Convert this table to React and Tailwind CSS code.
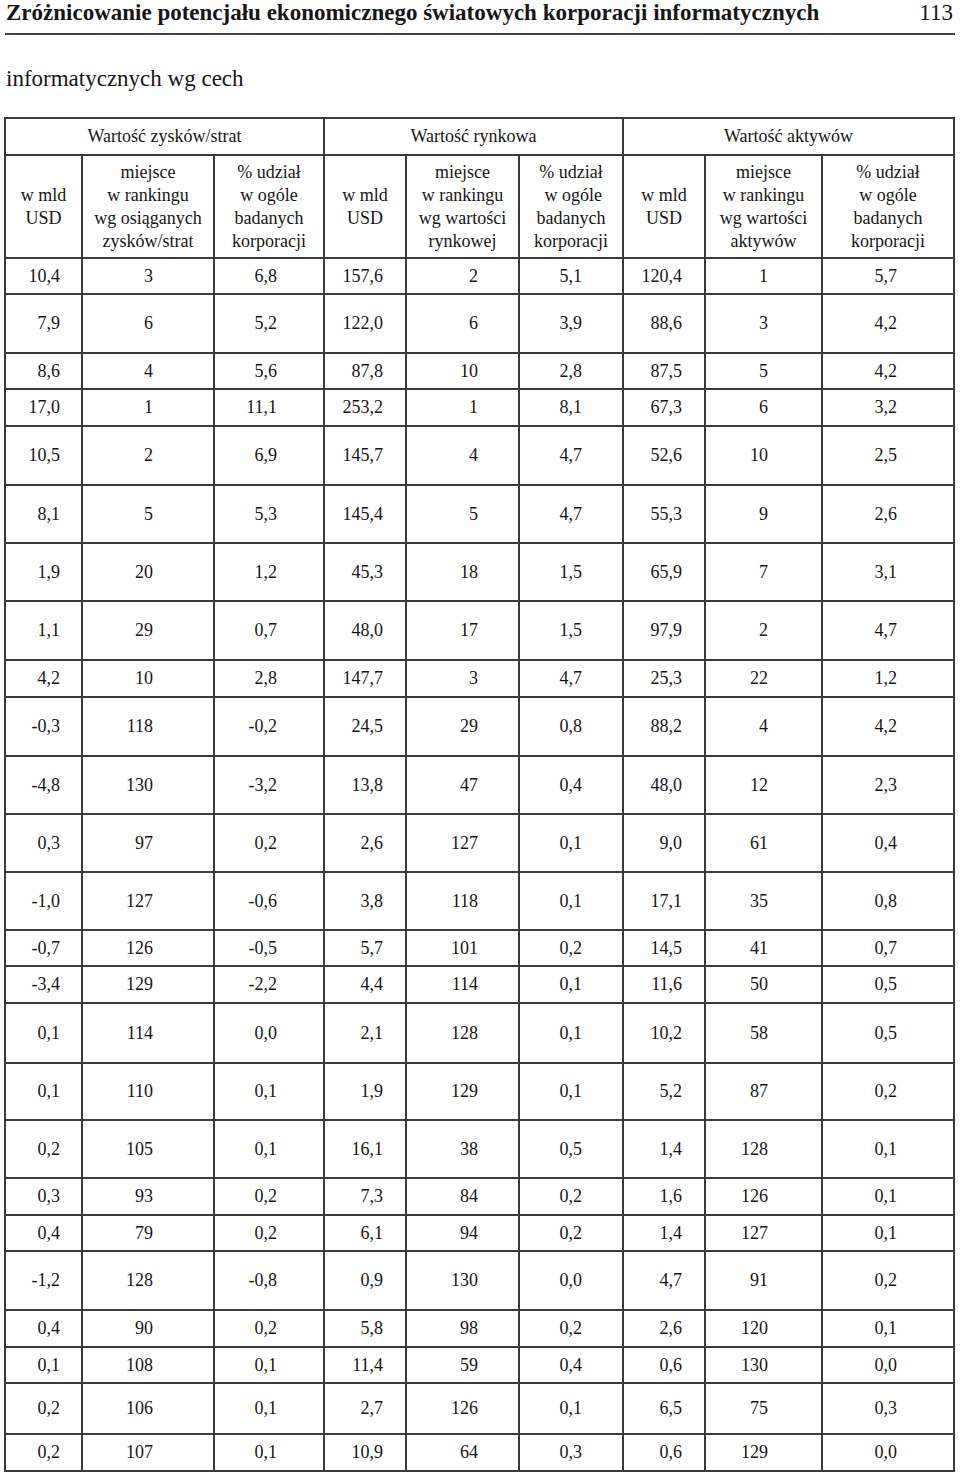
const rows = [
  [36, ["10,4", "3", "6,8", "157,6", "2", "5,1", "120,4", "1", "5,7"]],
  [59, ["7,9", "6", "5,2", "122,0", "6", "3,9", "88,6", "3", "4,2"]],
  [36, ["8,6", "4", "5,6", "87,8", "10", "2,8", "87,5", "5", "4,2"]],
  [37, ["17,0", "1", "11,1", "253,2", "1", "8,1", "67,3", "6", "3,2"]],
  [59, ["10,5", "2", "6,9", "145,7", "4", "4,7", "52,6", "10", "2,5"]],
  [58, ["8,1", "5", "5,3", "145,4", "5", "4,7", "55,3", "9", "2,6"]],
  [58, ["1,9", "20", "1,2", "45,3", "18", "1,5", "65,9", "7", "3,1"]],
  [59, ["1,1", "29", "0,7", "48,0", "17", "1,5", "97,9", "2", "4,7"]],
  [37, ["4,2", "10", "2,8", "147,7", "3", "4,7", "25,3", "22", "1,2"]],
  [59, ["-0,3", "118", "-0,2", "24,5", "29", "0,8", "88,2", "4", "4,2"]],
  [58, ["-4,8", "130", "-3,2", "13,8", "47", "0,4", "48,0", "12", "2,3"]],
  [58, ["0,3", "97", "0,2", "2,6", "127", "0,1", "9,0", "61", "0,4"]],
  [58, ["-1,0", "127", "-0,6", "3,8", "118", "0,1", "17,1", "35", "0,8"]],
  [36, ["-0,7", "126", "-0,5", "5,7", "101", "0,2", "14,5", "41", "0,7"]],
  [37, ["-3,4", "129", "-2,2", "4,4", "114", "0,1", "11,6", "50", "0,5"]],
  [60, ["0,1", "114", "0,0", "2,1", "128", "0,1", "10,2", "58", "0,5"]],
  [57, ["0,1", "110", "0,1", "1,9", "129", "0,1", "5,2", "87", "0,2"]],
  [58, ["0,2", "105", "0,1", "16,1", "38", "0,5", "1,4", "128", "0,1"]],
  [37, ["0,3", "93", "0,2", "7,3", "84", "0,2", "1,6", "126", "0,1"]],
  [36, ["0,4", "79", "0,2", "6,1", "94", "0,2", "1,4", "127", "0,1"]],
  [59, ["-1,2", "128", "-0,8", "0,9", "130", "0,0", "4,7", "91", "0,2"]],
  [37, ["0,4", "90", "0,2", "5,8", "98", "0,2", "2,6", "120", "0,1"]],
  [36, ["0,1", "108", "0,1", "11,4", "59", "0,4", "0,6", "130", "0,0"]],
  [51, ["0,2", "106", "0,1", "2,7", "126", "0,1", "6,5", "75", "0,3"]],
  [37, ["0,2", "107", "0,1", "10,9", "64", "0,3", "0,6", "129", "0,0"]],
];

const rowHeight = {
  36: "h-[36px]",
  37: "h-[37px]",
  51: "h-[51px]",
  57: "h-[57px]",
  58: "h-[58px]",
  59: "h-[59px]",
  60: "h-[60px]",
};

const colWidths = [77, 132, 110, 82, 113, 104, 82, 117, 132];

// right padding per column, so the decimals line up like in print
const colPad = [
  "pr-[21px]",
  "pr-[60px]",
  "pr-[46px]",
  "pr-[22px]",
  "pr-[40px]",
  "pr-[40px]",
  "pr-[22px]",
  "pr-[53px]",
  "pr-[56px]",
];

const cell = "border-2 border-[#3a3a3a] p-0 align-middle";

function SubHead({ lines }) {
  return (
    <th className={`${cell} font-normal text-center leading-[23px]`}>
      {lines.map((l, i) => (
        <div key={i}>{l}</div>
      ))}
    </th>
  );
}

export default function App() {
  return (
    <div className="w-[960px] bg-white text-[#161616] font-['Liberation_Serif',serif] pb-[4px]">
      <div className="px-[6px] pt-[1px] flex items-start justify-between">
        <h1 className="text-[23px] leading-[23px] font-bold">
          Zróżnicowanie potencjału ekonomicznego światowych korporacji informatycznych
        </h1>
        <span className="text-[23px] leading-[23px] pr-[1px]">113</span>
      </div>
      <div className="mx-[5px] mt-[9px] h-[2px] bg-[#444]" />

      <p className="mt-[32px] px-[6px] text-[23px] leading-[23px]">informatycznych wg cech</p>

      <table className="mt-[27px] ml-[4px] w-[951px] table-fixed border-collapse text-[18px]">
        <colgroup>
          {colWidths.map((w, i) => (
            <col key={i} style={{ width: w }} />
          ))}
        </colgroup>
        <thead>
          <tr className="h-[37px]">
            <th colSpan={3} className={`${cell} font-normal text-center`}>
              Wartość zysków/strat
            </th>
            <th colSpan={3} className={`${cell} font-normal text-center`}>
              Wartość rynkowa
            </th>
            <th colSpan={3} className={`${cell} font-normal text-center`}>
              Wartość aktywów
            </th>
          </tr>
          <tr className="h-[103px]">
            <SubHead lines={["w mld", "USD"]} />
            <SubHead lines={["miejsce", "w rankingu", "wg osiąganych", "zysków/strat"]} />
            <SubHead lines={["% udział", "w ogóle", "badanych", "korporacji"]} />
            <SubHead lines={["w mld", "USD"]} />
            <SubHead lines={["miejsce", "w rankingu", "wg wartości", "rynkowej"]} />
            <SubHead lines={["% udział", "\u00a0w ogóle", "badanych", "korporacji"]} />
            <SubHead lines={["w mld", "USD"]} />
            <SubHead lines={["miejsce", "w rankingu", "wg wartości", "aktywów"]} />
            <SubHead lines={["% udział", "w ogóle", "badanych", "korporacji"]} />
          </tr>
        </thead>
        <tbody>
          {rows.map(([h, vals], r) => (
            <tr key={r} className={rowHeight[h]}>
              {vals.map((v, c) => (
                <td key={c} className={`${cell} text-right ${colPad[c]}`}>
                  {v}
                </td>
              ))}
            </tr>
          ))}
        </tbody>
      </table>
    </div>
  );
}
